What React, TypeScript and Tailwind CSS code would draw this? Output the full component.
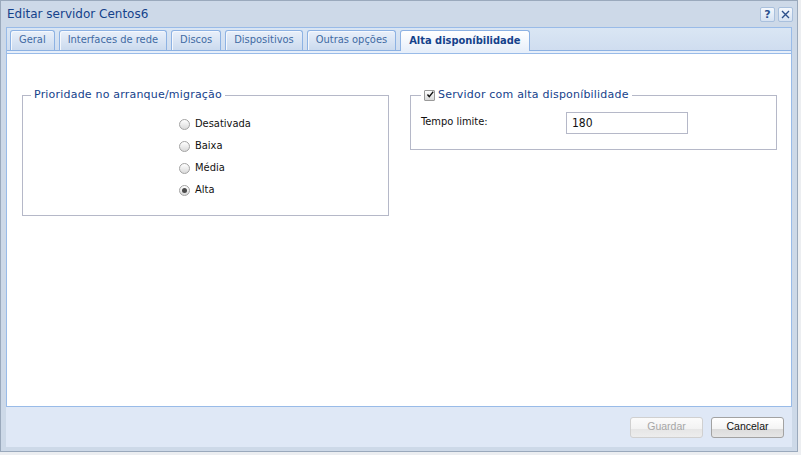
import React from "react"

const tabs = [
  "Geral",
  "Interfaces de rede",
  "Discos",
  "Dispositivos",
  "Outras opções",
  "Alta disponíbilidade",
]

function Radio({ checked, label }: { checked?: boolean; label: string }) {
  return (
    <div className="flex h-[22px] items-center gap-[5px]">
      <span className="flex h-[11px] w-[11px] items-center justify-center rounded-full border border-[#a3a3a3] bg-gradient-to-b from-[#ffffff] to-[#dadada]">
        {checked && <span className="h-[5px] w-[5px] rounded-full bg-[#4a4a4a]" />}
      </span>
      <span className="text-[11px] text-[#111]">{label}</span>
    </div>
  )
}

function ToolButton({ children }: { children: React.ReactNode }) {
  return (
    <div className="flex h-[15px] w-[15px] items-center justify-center rounded-[2px] border border-[#a9c0dd] bg-gradient-to-b from-[#f4f8fd] to-[#d6e2f2]">
      {children}
    </div>
  )
}

export default function App() {
  return (
    <div className="h-[455px] w-[801px] bg-[#eceef1] font-['DejaVu_Sans_Condensed','DejaVu_Sans',sans-serif]">
      <div className="flex h-[452px] w-[798px] flex-col border border-[#9aa9bc] bg-[#cdd9e8]">
        {/* header */}
        <div className="flex h-[26px] shrink-0 items-center justify-between pl-[6px] pr-[4px]">
          <span className="font-['DejaVu_Sans',sans-serif] text-[12px] text-[#15428b]">
            Editar servidor Centos6
          </span>
          <div className="flex gap-[3px]">
            <ToolButton>
              <span className="font-['DejaVu_Sans',sans-serif] text-[11px] font-bold leading-none text-[#2b5190]">?</span>
            </ToolButton>
            <ToolButton>
              <svg width="9" height="9" viewBox="0 0 9 9">
                <path d="M1 1 L8 8 M8 1 L1 8" stroke="#2b4f8a" strokeWidth="1.4" />
              </svg>
            </ToolButton>
          </div>
        </div>

        <div className="mx-[5px] mb-[4px] flex flex-1 flex-col bg-[#dfe8f6]">
          {/* panel */}
          <div className="flex flex-1 flex-col border border-[#99bbe8]">
            {/* tab strip */}
            <div className="flex h-[25px] shrink-0 flex-col bg-gradient-to-b from-[#dae6f4] to-[#cedcef]">
              <div className="flex flex-1 items-end gap-[4px] pl-[3px]">
                {tabs.map((t, i) => {
                  const active = i === tabs.length - 1
                  return (
                    <div
                      key={t}
                      className={
                        active
                          ? "relative -mb-px flex h-[21px] items-center rounded-t-[3px] border border-b-0 border-[#8db2e3] bg-gradient-to-b from-[#ffffff] to-[#e7effa] px-[8px] text-[11px] font-bold text-[#15428b]"
                          : "flex h-[20px] items-center rounded-t-[3px] border border-b-0 border-[#8db2e3] bg-gradient-to-b from-[#e9f0fa] to-[#cbdaee] px-[8px] text-[11px] text-[#416aa3] shadow-[inset_1px_1px_0_#f5f8fd]"
                      }
                    >
                      {t}
                    </div>
                  )
                })}
              </div>
              <div className="h-[3px] border-t border-[#8db2e3] bg-[#e7effa]" />
            </div>

            {/* content */}
            <div className="flex-1 border-t border-[#99bbe8] bg-white">
              <div className="grid grid-cols-[367px_367px] items-start gap-x-[21px] pl-[15px] pt-[33px]">
                <fieldset className="h-[129px] border border-[#b5b8c8] pl-[8px]">
                  <legend className="px-[3px] font-['DejaVu_Sans',sans-serif] text-[11px] tracking-[0.2px] text-[#15428b]">
                    Prioridade no arranque/migração
                  </legend>
                  <div className="flex flex-col pl-[148px] pt-[10px]">
                    <Radio label="Desativada" />
                    <Radio label="Baixa" />
                    <Radio label="Média" />
                    <Radio checked label="Alta" />
                  </div>
                </fieldset>

                <fieldset className="h-[63px] border border-[#b5b8c8] pl-[10px]">
                  <legend className="flex items-center gap-[3px] px-[3px] font-['DejaVu_Sans',sans-serif] text-[11px] tracking-[0.2px] text-[#15428b]">
                    <span className="flex h-[11px] w-[11px] items-center justify-center rounded-[1px] border border-[#9a9a9a] bg-gradient-to-b from-[#ffffff] to-[#d8d8d8]">
                      <svg width="11" height="11" viewBox="0 0 11 11" className="-mt-[2px] ml-[1px]">
                        <path d="M2 5.5 L4.5 8.5 L10 1.5" fill="none" stroke="#111" strokeWidth="2" />
                      </svg>
                    </span>
                    Servidor com alta disponíbilidade
                  </legend>
                  <div className="flex items-center pt-[8px]">
                    <span className="w-[145px] text-[11px] text-[#111]">Tempo limite:</span>
                    <div className="flex h-[22px] w-[122px] items-center border border-[#b5b8c8] bg-white pl-[5px] text-[12px] text-[#111]">
                      180
                    </div>
                  </div>
                </fieldset>
              </div>
            </div>
          </div>

          {/* footer */}
          <div className="flex h-[40px] shrink-0 items-center justify-end gap-[8px] pr-[8px] font-['Liberation_Sans',sans-serif] text-[10.5px]">
            <div className="flex h-[21px] w-[73px] items-center justify-center rounded-[3px] border border-[#d0d0d0] bg-[linear-gradient(#fbfbfb_0%,#f2f2f2_60%,#e6e6e6_60%,#ededed_100%)] text-[#a6a6a6]">
              Guardar
            </div>
            <div className="flex h-[21px] w-[73px] items-center justify-center rounded-[3px] border border-[#a2a2a2] bg-[linear-gradient(#ffffff_0%,#f3f3f3_60%,#dcdcdc_60%,#e6e6e6_100%)] text-[#111]">
              Cancelar
            </div>
          </div>
        </div>
      </div>
    </div>
  )
}
